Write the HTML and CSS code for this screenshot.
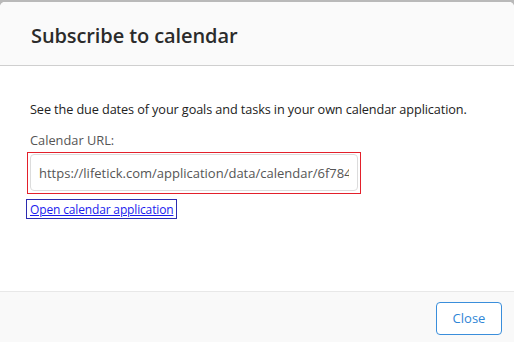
FILE: index.html
```html
<!DOCTYPE html>
<html lang="en">
<head>
    <meta charset="UTF-8">
    <title>Subscribe to calendar</title>
    <link rel="stylesheet" href="styles.css">
</head>
<body>
    <div class="modal">
        <header class="modal-header">
            <h1 class="modal-title">Subscribe to calendar</h1>
        </header>

        <section class="modal-body">
            <p class="intro">See the due dates of your goals and tasks in your own calendar application.</p>
            <label class="field-label" for="calendar-url">Calendar URL:</label>
            <div class="url-frame">
                <input type="text" id="calendar-url" class="url-input" readonly
                    value="https://lifetick.com/application/data/calendar/6f78410c2a9e4b5d8f1e7c3a">
            </div>
            <div class="link-frame">
                <a href="#" class="open-link">Open calendar application</a>
            </div>
        </section>

        <footer class="modal-footer">
            <button type="button" class="btn-close">Close</button>
        </footer>
    </div>
</body>
</html>
```

FILE: styles.css
```css
html, body { margin: 0; height: 100%; }
body { background: #b9b9b9; padding-top: 2px; box-sizing: border-box; font-family: 'Open Sans', 'Noto Sans', sans-serif; color: #333; }

.modal { display: flex; flex-direction: column; height: 340px; background: #fff; border-radius: 5px 5px 0 0; overflow: hidden; }

.modal-header { height: 64px; box-sizing: border-box; padding: 3px 0 0 31px; background: #fafafa; border-bottom: 1px solid #cfcfcf; display: flex; align-items: center; }
.modal-title { margin: 0; font-size: 20px; font-weight: 600; color: #2b2b2b; letter-spacing: -0.1px; }

.modal-body { flex: 1; padding: 34px 0 0 30px; font-size: 12.7px; }
.intro { margin: 0 0 13px 0; line-height: 18px; color: #222; letter-spacing: -0.1px; }
.field-label { display: block; line-height: 18px; margin-bottom: 3px; color: #555; font-size: 12.8px; }

.url-frame { width: 328px; margin-left: -3px; border: 1px solid #e3202b; padding: 1px 2px 2px; }
.url-input { display: block; box-sizing: border-box; width: 328px; height: 37px; padding: 0 8px; border: 1px solid #dcdcdc; border-radius: 4px; font-family: inherit; font-size: 13px; color: #555; background: #fff; outline: none; }

.link-frame { display: inline-block; margin: 5px 0 0 -4px; padding: 1px 3px 0; border: 1px solid #2b2bb0; line-height: 17px; }
.open-link { color: #1a1aee; font-size: 12px; letter-spacing: -0.15px; }

.modal-footer { height: 50px; background: #f9f9f9; border-top: 1px solid #e8e8e8; display: flex; justify-content: flex-end; align-items: center; padding-right: 12px; }
.btn-close { width: 66px; height: 33px; margin-top: 2px; background: #fff; border: 1px solid #3a8edb; border-radius: 4px; color: #2f86d6; font-family: inherit; font-size: 13px; }
```
